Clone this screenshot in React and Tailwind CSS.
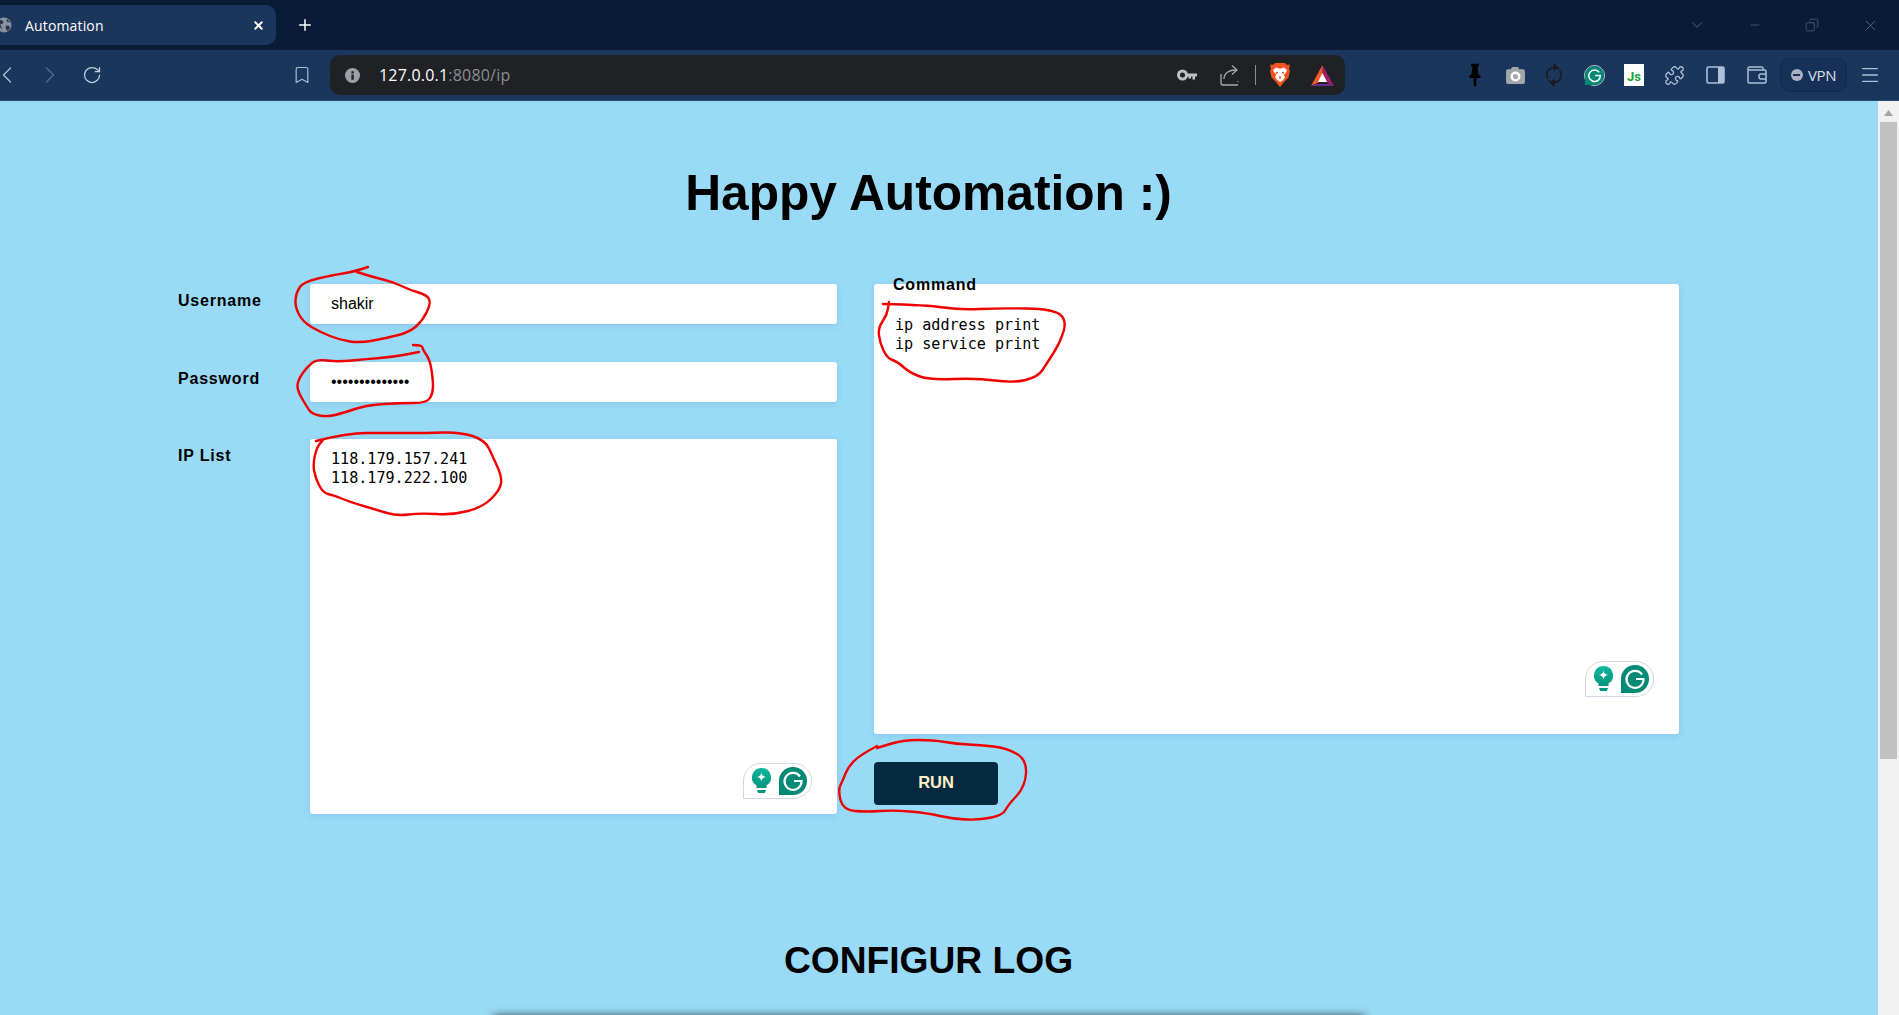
import { ChevronLeft, ChevronRight, RotateCw, Bookmark, X, Plus, Minus, Copy, ChevronDown, Puzzle, Menu } from 'lucide-react';

const labelClass = 'text-base font-bold tracking-wider text-black leading-6';
const fieldClass = 'bg-white rounded-[3px] shadow-[0_2px_6px_rgba(60,120,200,0.18)] text-black outline-none';
const monoClass = "font-['DejaVu_Sans_Mono',monospace] text-[15.1px] leading-[19px] resize-none";

// red pen marks, points read from the reference in page pixels
const SCRIBBLES = [
  [[368, 267], [353, 272], [333, 275], [303, 282], [296, 293], [295, 307], [303, 322], [320, 332], [340, 340], [360, 343], [387, 338], [410, 332], [423, 320], [431, 303], [427, 295], [410, 290], [393, 282], [373, 277], [357, 272]],
  [[413, 345], [422, 345], [423, 350], [430, 360], [433, 380], [433, 393], [427, 403], [400, 403], [367, 405], [343, 413], [327, 417], [312, 414], [307, 407], [297, 390], [298, 380], [307, 367], [317, 359], [337, 362], [367, 359], [393, 357], [419, 352]],
  [[316, 441], [347, 433], [387, 433], [427, 433], [460, 432], [485, 440], [493, 457], [502, 477], [500, 490], [483, 507], [453, 515], [420, 513], [397, 516], [377, 510], [350, 502], [333, 495], [323, 493], [315, 477], [313, 463], [317, 447], [323, 440]],
  [[883, 304], [927, 305], [960, 310], [1000, 308], [1053, 309], [1067, 320], [1060, 343], [1047, 363], [1038, 377], [1013, 383], [977, 378], [930, 380], [910, 373], [898, 362], [887, 358], [880, 343], [878, 328], [887, 315], [889, 302]],
  [[877, 746], [860, 755], [848, 767], [843, 780], [838, 790], [843, 810], [867, 812], [893, 810], [927, 813], [953, 819], [980, 820], [1003, 815], [1008, 805], [1025, 787], [1027, 760], [1007, 748], [980, 745], [957, 744], [933, 740], [903, 740], [877, 748]],
];

const scribblePath = (pts) => {
  let d = `M${pts[0][0]} ${pts[0][1]}`;
  for (let i = 1; i < pts.length - 1; i++) {
    const mx = (pts[i][0] + pts[i + 1][0]) / 2;
    const my = (pts[i][1] + pts[i + 1][1]) / 2;
    d += ` Q${pts[i][0]} ${pts[i][1]} ${mx} ${my}`;
  }
  const last = pts[pts.length - 1];
  return `${d} L${last[0]} ${last[1]}`;
};

const GrammarlyG = ({ size = 28 }) => (
  <svg width={size} height={size} viewBox="0 0 28 28">
    <path d="M14 0a14 14 0 1 1 0 28H0V14A14 14 0 0 1 14 0z" fill="#028a74" />
    <path d="M21 9.5A8.5 8.5 0 1 0 22.5 14H15" fill="none" stroke="#fff" strokeWidth="2.2" />
  </svg>
);

const GrammarlyWidget = ({ className }) => (
  <div className={`absolute flex items-center gap-[8px] pl-[8px] pr-[4px] w-[69px] h-[36px] bg-white border border-[#d5d6e4] rounded-t-[18px] rounded-br-[18px] ${className}`}>
    <svg width="19" height="26" viewBox="0 0 19 26">
      <defs>
        <linearGradient id="bulb" x1="0" y1="0" x2="0" y2="1">
          <stop offset="0" stopColor="#10b69d" />
          <stop offset="1" stopColor="#02947e" />
        </linearGradient>
      </defs>
      <path d="M9.5 0a9.5 9.5 0 0 1 5 17.6V20h-10v-2.4A9.5 9.5 0 0 1 9.5 0z" fill="url(#bulb)" />
      <path d="M5 22h9l-1.2 3H6.200z" fill="#02947e" />
      <path d="M9.500 4.500c.5 2.800 1.700 4 4.500 4.500-2.800.5-4 1.700-4.500 4.500-.5-2.800-1.700-4-4.500-4.500 2.800-.5 4-1.700 4.500-4.500z" fill="#fff" />
    </svg>
    <GrammarlyG />
  </div>
);

const ToolIcon = ({ children, className = 'w-[40px]' }) => (
  <div className={`h-full flex items-center justify-center shrink-0 ${className}`}>{children}</div>
);

const BrowserChrome = () => (
  <>
    {/* Tab strip */}
    <div className="h-[50px] shrink-0 bg-[#0a1b36] flex items-start relative">
      <div className="mt-[5px] w-[276px] h-[40px] bg-[#1a365d] rounded-r-[10px] flex items-center text-white">
        <svg className="ml-[-4px]" width="16" height="16" viewBox="0 0 16 16">
          <circle cx="8" cy="8" r="7.500" fill="#8a929e" />
          <path d="M3 3c3 0 5 1 4 3S3 7 4 10c1 2 3 2 3 5M11 2c-1 2 0 3 2 3l2 1M10 9c2-1 4 0 4 2l-2 3c-2-1-3-3-2-5z" fill="#26344c" />
        </svg>
        <span className="ml-[13px] text-[14px] font-['Open_Sans',sans-serif] tracking-[0.15px]">Automation</span>
        <X className="ml-auto mr-[11px]" size={13} strokeWidth={3.4} />
      </div>
      <Plus className="mt-[16px] ml-[20px] text-white" size={18} strokeWidth={2} />
      <div className="ml-auto h-full flex items-center text-[#5a6a85]">
        <ChevronDown className="mr-[42px]" size={18} strokeWidth={1.2} />
        <Minus className="mr-[43px]" size={14} strokeWidth={1.2} />
        <Copy className="mr-[43px] -scale-x-100" size={14} strokeWidth={1.2} />
        <X className="mr-[20px]" size={17} strokeWidth={1.2} />
      </div>
    </div>

    {/* Address bar */}
    <div className="h-[51px] shrink-0 bg-[#1a365d] border-b border-[#2a4a73] flex items-center overflow-hidden">
      <ToolIcon className="w-[42px] ml-[-14px]"><ChevronLeft size={28} strokeWidth={1.2} className="text-[#aebccf]" /></ToolIcon>
      <ToolIcon className="w-[42px] ml-[1px]"><ChevronRight size={28} strokeWidth={1.2} className="text-[#53698a]" /></ToolIcon>
      <ToolIcon className="w-[42px]"><RotateCw size={20} strokeWidth={1.5} className="text-[#c3cfdd]" /></ToolIcon>
      <ToolIcon className="w-[40px] ml-[169px]"><Bookmark size={20} strokeWidth={1.4} className="text-[#aebccf]" /></ToolIcon>

      <div className="ml-[8px] w-[1015px] h-[40px] bg-[#202124] rounded-[10px] flex items-center shrink-0">
        <svg className="ml-[15px]" width="15" height="15" viewBox="0 0 16 16">
          <circle cx="8" cy="8" r="8" fill="#9aa0a6" />
          <rect x="6.800" y="7" width="2.600" height="5.500" fill="#202124" />
          <rect x="6.800" y="3.500" width="2.600" height="2.300" fill="#202124" />
        </svg>
        <span className="ml-[19px] text-[16px] font-['Open_Sans',sans-serif] tracking-[0.2px] text-white">
          127.0.0.1<span className="text-[#8b8e92]">:8080/ip</span>
        </span>
        <div className="ml-auto flex items-center">
          <svg width="20" height="12" viewBox="0 0 20 12">
            <circle cx="5.500" cy="6" r="4" fill="none" stroke="#bdc1c6" strokeWidth="3" />
            <path d="M9 4.500h11v3h-2v3h-2.500v-3h-1.500v2h-2.500v-2H9z" fill="#bdc1c6" />
          </svg>
          <svg className="ml-[23px]" width="20" height="22" viewBox="0 0 20 22" fill="none" stroke="#a5a8ac" strokeWidth="1.300">
            <path d="M1 10v9a2 2 0 0 0 2 2h15" />
            <path d="M18 18v-1M4 15c0-6 5-9 12-9" />
            <path d="M12 1.500l5 4.500-5 4.500" />
          </svg>
          <div className="ml-[15px] w-px h-[20px] bg-[#8a8d91]" />
          <svg className="ml-[14px]" width="20" height="24" viewBox="0 0 20 24">
            <path d="M5 0h10l2 2 3-.5-1 4.500 1 2-1.500 6.500-4 4L10 24l-4.500-5.500-4-4L0 8l1-2L0 1.500 3 2z" fill="#f1531d" />
            <path d="M6 4.500l4 1.200 4-1.200 3 2.500-1.200 3-2.300 2 1.500 2-1.800 3L10 19l-3.200-2.500L5 13.500l1.500-2-2.300-2L3 7z" fill="#fff" />
            <path d="M8 9.500l-2 .5M12 9.500l2 .5M10 13v3" stroke="#f1531d" strokeWidth="1.400" />
          </svg>
          <svg className="ml-[21px] mr-[11px]" width="23" height="21" viewBox="0 0 23 21">
            <path d="M11.500 0L23 21l-11.500-5.500z" fill="#9e1f63" />
            <path d="M0 21L11.500 0v15.500z" fill="#f15a29" />
            <path d="M0 21l4-2h15l4 2z" fill="#662d91" />
            <path d="M11.500 8l4.500 9H7z" fill="#fff" />
          </svg>
        </div>
      </div>

      <ToolIcon className="w-[40px] ml-[110px]">
        <svg width="12" height="24" viewBox="0 0 14 26" fill="#000">
          <path d="M2.500 0h9v3h-1.500l1 9 2.500 2v2.500H8.500V26h-3v-9.500H.5V14l2.500-2 1-9H2.500z" />
        </svg>
      </ToolIcon>
      <ToolIcon>
        <svg width="19" height="17" viewBox="0 0 20 18">
          <path d="M6.500 0h6l1.500 2.500h4a2 2 0 0 1 2 2V16a2 2 0 0 1-2 2H2a2 2 0 0 1-2-2V4.500a2 2 0 0 1 2-2h3z" fill="#a2a5a9" />
          <circle cx="10" cy="10" r="4" fill="none" stroke="#fff" strokeWidth="2.600" />
        </svg>
      </ToolIcon>
      <ToolIcon className="w-[40px] ml-[-1px]">
        <svg width="18" height="24" viewBox="0 0 18 24" fill="none" stroke="#1a1a1a" strokeWidth="1.600">
          <path d="M14.500 6.500A7.500 7.500 0 0 0 3 16" />
          <path d="M3.500 17.500A7.500 7.500 0 0 0 15 8" />
          <path d="M9 1l3.500 3L9 7.500zM9 23l-3.500-3L9 16.500z" fill="#1a1a1a" strokeWidth="1" />
        </svg>
      </ToolIcon>
      <ToolIcon>
        <div className="rounded-full border border-[#c9d2dc] leading-none">
          <GrammarlyG size={19} />
        </div>
      </ToolIcon>
      <ToolIcon>
        <div className="w-[20px] h-[22px] bg-white flex items-end justify-center">
          <span className="text-[#17a43a] text-[13px] font-bold font-['Roboto',sans-serif] leading-[18px]">Js</span>
        </div>
      </ToolIcon>
      <ToolIcon><Puzzle size={21} strokeWidth={1.5} className="text-[#aebfd6]" /></ToolIcon>
      <ToolIcon className="w-[40px] ml-[1px]">
        <svg width="19" height="18" viewBox="0 0 19 18">
          <rect x="1" y="1" width="17" height="16" rx="1.500" fill="none" stroke="#aebfd6" strokeWidth="1.600" />
          <rect x="12" y="1" width="6" height="16" fill="#aebfd6" />
        </svg>
      </ToolIcon>
      <ToolIcon className="w-[40px] ml-[2px]">
        <svg width="20" height="18" viewBox="0 0 20 18" fill="none" stroke="#aebfd6" strokeWidth="1.500">
          <path d="M16 4V2.500A1.500 1.500 0 0 0 14.500 1H2.500A1.500 1.500 0 0 0 1 2.500v13A1.500 1.500 0 0 0 2.500 17h15a1.500 1.500 0 0 0 1.500-1.500V5.500A1.500 1.500 0 0 0 17.500 4H1" />
          <path d="M19 8h-5a2 2 0 0 0-2 2v1a2 2 0 0 0 2 2h5" />
        </svg>
      </ToolIcon>
      <div className="ml-[3px] w-[67px] h-[34px] shrink-0 rounded-[10px] border border-[#10294d] bg-[#173057] flex items-center justify-center gap-[5px]">
        <span className="w-[12px] h-[12px] rounded-full bg-[#a9b0c6] flex items-center justify-center">
          <span className="w-[7px] h-[2px] bg-[#173057]" />
        </span>
        <span className="text-[15px] text-[#d9e0ea] font-['Open_Sans',sans-serif] tracking-[-0.4px]">VPN</span>
      </div>
      <ToolIcon className="w-[46px]"><Menu size={22} strokeWidth={1.5} className="text-[#aebfd6]" /></ToolIcon>
    </div>
  </>
);

const App = () => {
  return (
    <div className="relative h-screen overflow-hidden flex flex-col bg-[#99daf6] font-['Liberation_Sans',Arial,sans-serif]">
      <BrowserChrome />

      <div className="flex flex-1 min-h-0">
        <main className="flex-1 min-w-0 overflow-hidden pl-[178px]">
          <div className="w-[1501px]">
            <h1 className="mt-[62px] text-center text-[49.7px] leading-[60px] font-bold text-black">Happy Automation :)</h1>

            <div className="mt-[61px] flex">
              {/* Left column */}
              <div className="w-[659px] shrink-0 flex flex-col">
                <div className="flex h-[40px]">
                  <label className={`w-[132px] pt-[5px] ${labelClass}`}>Username</label>
                  <input readOnly value="shakir" className={`w-[527px] h-[40px] pl-[21px] text-base ${fieldClass}`} />
                </div>
                <div className="flex h-[40px] mt-[38px]">
                  <label className={`w-[132px] pt-[5px] ${labelClass}`}>Password</label>
                  <input readOnly type="password" value="12345678901234" className={`w-[527px] h-[40px] pl-[21px] text-base ${fieldClass}`} />
                </div>
                <div className="flex mt-[37px]">
                  <label className={`w-[132px] pt-[5px] ${labelClass}`}>IP List</label>
                  <div className="relative w-[527px] h-[375px]">
                    <textarea readOnly spellCheck={false} value={'118.179.157.241\n118.179.222.100'} className={`w-full h-full pl-[21px] pt-[11px] ${monoClass} ${fieldClass}`} />
                    <GrammarlyWidget className="right-[25px] bottom-[15px]" />
                  </div>
                </div>
              </div>

              {/* Right column */}
              <div className="ml-[37px] w-[805px] shrink-0 flex flex-col items-start">
                <div className="relative w-full h-[450px]">
                  <textarea readOnly spellCheck={false} value={'ip address print\nip service print'} className={`w-full h-full pl-[21px] pt-[32px] ${monoClass} ${fieldClass}`} />
                  <label className={`absolute left-[19px] top-[-11px] ${labelClass}`}>Command</label>
                  <GrammarlyWidget className="right-[25px] bottom-[37px]" />
                </div>
                <button className="mt-[28px] w-[124px] h-[43px] pb-[2px] rounded-[4px] bg-[#05293f] text-[#fdf0c8] text-[16.5px] font-bold">RUN</button>
              </div>
            </div>

            <h2 className="mt-[123px] text-center text-[37.2px] leading-[46px] font-bold text-black">CONFIGUR LOG</h2>

            <div className="mx-auto mt-[32px] w-[872px] h-[40px] bg-[#99daf6] shadow-[0_0_8px_rgba(0,0,0,0.6)]" />
          </div>
        </main>

        {/* Scrollbar */}
        <div className="w-[21px] shrink-0 bg-[#f1f1f1] flex flex-col items-center">
          <svg className="mt-[9px]" width="9" height="6" viewBox="0 0 9 6"><path d="M4.500 0L9 6H0z" fill="#a3a3a3" /></svg>
          <div className="mt-[6px] w-[17px] h-[637px] bg-[#c1c1c1]" />
        </div>
      </div>

      {/* Red annotations drawn over the screenshot */}
      <svg className="absolute inset-0 pointer-events-none" width="1899" height="1015" viewBox="0 0 1899 1015" fill="none" stroke="#f00000" strokeWidth="2.400" strokeLinejoin="round" strokeLinecap="round">
        {SCRIBBLES.map((pts, i) => (
          <path key={i} d={scribblePath(pts)} />
        ))}
      </svg>
    </div>
  );
};

export default App;
